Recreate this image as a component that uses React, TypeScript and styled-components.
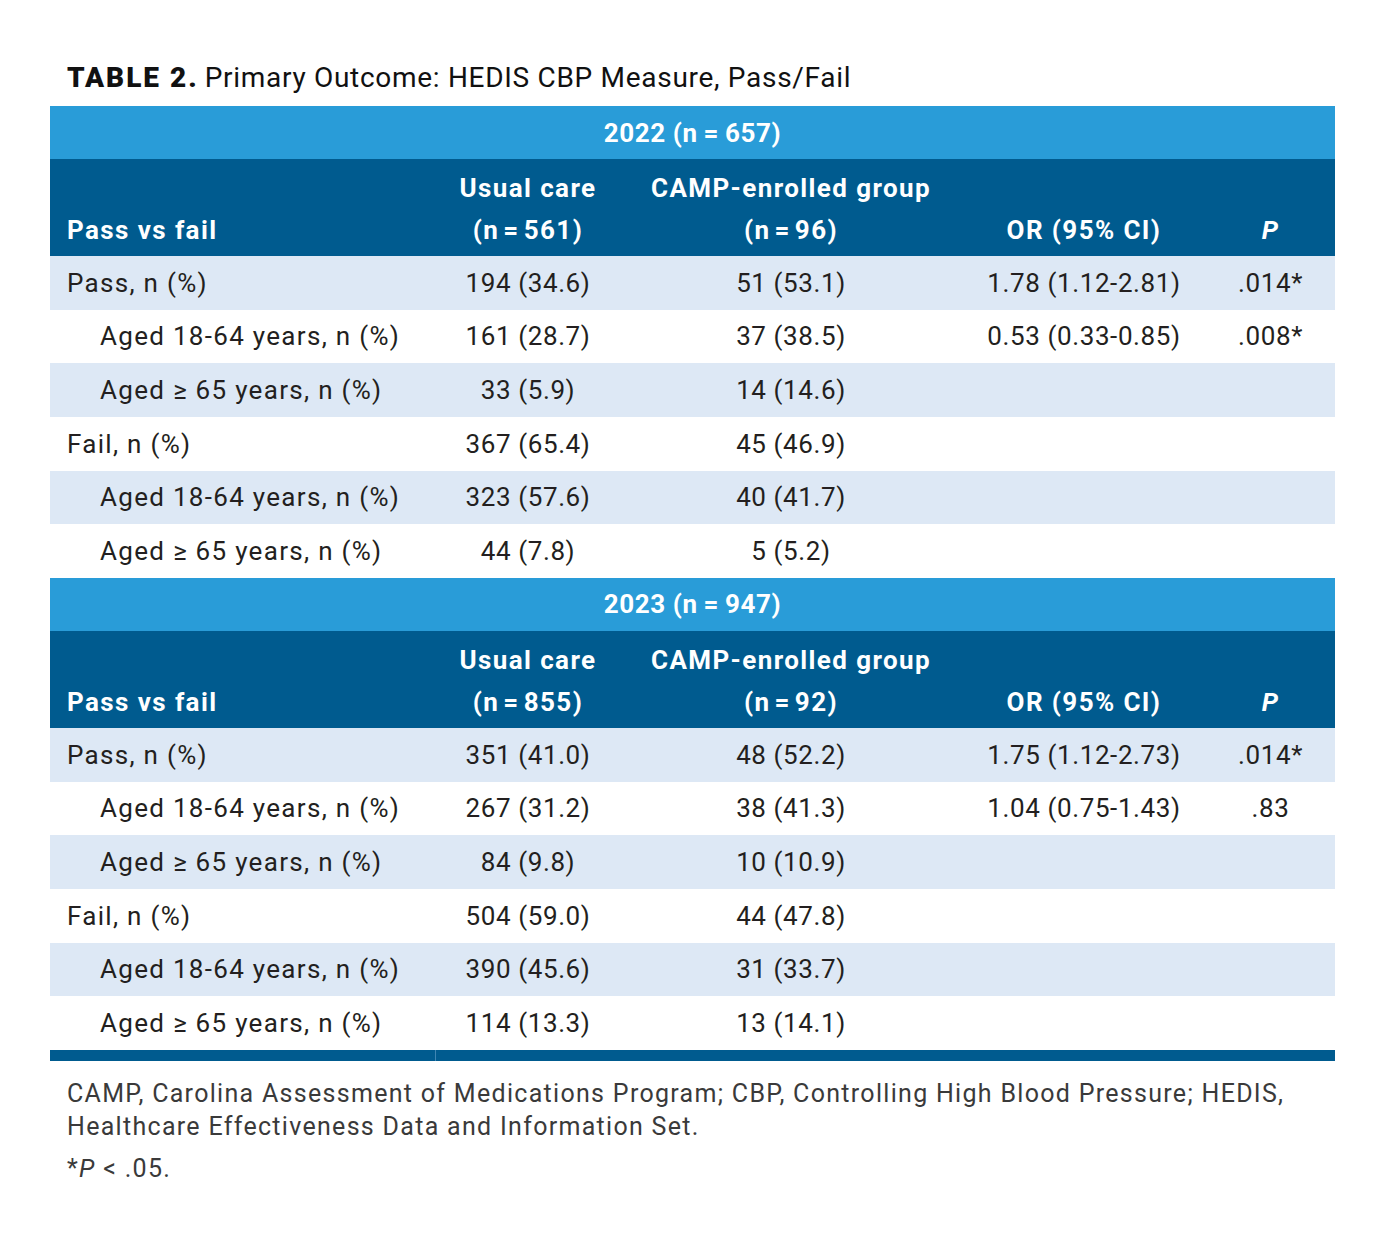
import React from "react";
import styled, { createGlobalStyle } from "styled-components";

const Global = createGlobalStyle`
  html, body { margin: 0; padding: 0; background: #ffffff; }
  body { font-family: Roboto, "Liberation Sans", sans-serif; color: #231f20; }
`;

const Page = styled.div`
  padding: 58px 51px 40px 50px;
  width: 1285px;
`;

const Title = styled.h1`
  margin: 0 0 8px 17px;
  font-size: 28px;
  line-height: 40px;
  font-weight: 400;
  color: #111;
  letter-spacing: 0.7px;
`;

const TitleLabel = styled.span`
  font-weight: 900;
  letter-spacing: 2px;
  margin-right: 6px;
`;

const Grid = styled.div`
  display: grid;
  grid-template-columns: 386px 184px 342px 244px 129px;
`;

const YearBand = styled.div`
  grid-column: 1 / -1;
  height: 53px;
  background: #299cd8;
  color: #fff;
  font-weight: 700;
  font-size: 26px;
  letter-spacing: 0.6px;
  display: flex;
  align-items: center;
  justify-content: center;
`;

const HeadCell = styled.div<{ $align?: "left" | "center"; $italic?: boolean }>`
  background: #005b8f;
  color: #fff;
  font-weight: 700;
  font-size: 26px;
  line-height: 42px;
  letter-spacing: 1.4px;
  height: 97px;
  box-sizing: border-box;
  padding: 0 0 5px ${(p) => (p.$align === "left" ? "17px" : "0")};
  display: flex;
  flex-direction: column;
  justify-content: flex-end;
  align-items: ${(p) => (p.$align === "left" ? "flex-start" : "center")};
  font-style: ${(p) => (p.$italic ? "italic" : "normal")};
  white-space: nowrap;
`;

const Cell = styled.div<{ $shade: boolean; $label?: boolean; $indent?: boolean }>`
  background: ${(p) => (p.$shade ? "#dde8f5" : "#ffffff")};
  height: 53.67px;
  font-size: 26px;
  letter-spacing: ${(p) => (p.$label ? "1.3px" : "0.6px")};
  display: flex;
  align-items: center;
  justify-content: ${(p) => (p.$label ? "flex-start" : "center")};
  padding-left: ${(p) => (p.$label ? (p.$indent ? "50px" : "17px") : "0")};
  color: #231f20;
  white-space: nowrap;
`;

const BottomBar = styled.div`
  display: flex;
  height: 11px;
  gap: 1px;
  background: #3f86b3;
`;

const BarSeg = styled.div<{ $w: string }>`
  background: #005b8f;
  flex: ${(p) => p.$w};
`;

const Notes = styled.div`
  margin: 16px 0 0 17px;
  font-size: 25px;
  line-height: 33px;
  color: #3a3a3a;
  letter-spacing: 1.3px;
`;

const NoteP = styled.p`
  margin: 0 0 9px 0;
`;

type Row = { label: string; indent?: boolean; uc: string; camp: string; or?: string; p?: string };

const t2022: Row[] = [
  { label: "Pass, n (%)", uc: "194 (34.6)", camp: "51 (53.1)", or: "1.78 (1.12-2.81)", p: ".014*" },
  { label: "Aged 18-64 years, n (%)", indent: true, uc: "161 (28.7)", camp: "37 (38.5)", or: "0.53 (0.33-0.85)", p: ".008*" },
  { label: "Aged \u2265 65 years, n (%)", indent: true, uc: "33 (5.9)", camp: "14 (14.6)" },
  { label: "Fail, n (%)", uc: "367 (65.4)", camp: "45 (46.9)" },
  { label: "Aged 18-64 years, n (%)", indent: true, uc: "323 (57.6)", camp: "40 (41.7)" },
  { label: "Aged \u2265 65 years, n (%)", indent: true, uc: "44 (7.8)", camp: "5 (5.2)" },
];

const t2023: Row[] = [
  { label: "Pass, n (%)", uc: "351 (41.0)", camp: "48 (52.2)", or: "1.75 (1.12-2.73)", p: ".014*" },
  { label: "Aged 18-64 years, n (%)", indent: true, uc: "267 (31.2)", camp: "38 (41.3)", or: "1.04 (0.75-1.43)", p: ".83" },
  { label: "Aged \u2265 65 years, n (%)", indent: true, uc: "84 (9.8)", camp: "10 (10.9)" },
  { label: "Fail, n (%)", uc: "504 (59.0)", camp: "44 (47.8)" },
  { label: "Aged 18-64 years, n (%)", indent: true, uc: "390 (45.6)", camp: "31 (33.7)" },
  { label: "Aged \u2265 65 years, n (%)", indent: true, uc: "114 (13.3)", camp: "13 (14.1)" },
];

const eqBand = "\u2009=\u2009";
const eqHead = "\u200A=\u200A";

function Section({ year, n, uc, camp, rows }: { year: string; n: string; uc: string; camp: string; rows: Row[] }) {
  return (
    <>
      <YearBand>{`${year} (n${eqBand}${n})`}</YearBand>
      <HeadCell $align="left">
        <span>Pass vs fail</span>
      </HeadCell>
      <HeadCell>
        <span>Usual care</span>
        <span>{`(n${eqHead}${uc})`}</span>
      </HeadCell>
      <HeadCell>
        <span>CAMP-enrolled group</span>
        <span>{`(n${eqHead}${camp})`}</span>
      </HeadCell>
      <HeadCell>
        <span>OR (95% CI)</span>
      </HeadCell>
      <HeadCell $italic>
        <span>P</span>
      </HeadCell>
      {rows.map((r, i) => {
        const shade = i % 2 === 0;
        return (
          <React.Fragment key={i}>
            <Cell $shade={shade} $label $indent={r.indent}>{r.label}</Cell>
            <Cell $shade={shade}>{r.uc}</Cell>
            <Cell $shade={shade}>{r.camp}</Cell>
            <Cell $shade={shade}>{r.or ?? ""}</Cell>
            <Cell $shade={shade}>{r.p ?? ""}</Cell>
          </React.Fragment>
        );
      })}
    </>
  );
}

export default function App() {
  return (
    <Page>
      <Global />
      <Title>
        <TitleLabel>TABLE 2.</TitleLabel>Primary Outcome: HEDIS CBP Measure, Pass/Fail
      </Title>
      <Grid>
        <Section year="2022" n="657" uc="561" camp="96" rows={t2022} />
        <Section year="2023" n="947" uc="855" camp="92" rows={t2023} />
      </Grid>
      <BottomBar>
        <BarSeg $w="0 0 385px" />
        <BarSeg $w="1 1 auto" />
      </BottomBar>
      <Notes>
        <NoteP>
          CAMP, Carolina Assessment of Medications Program; CBP, Controlling High Blood Pressure; HEDIS,
          Healthcare Effectiveness Data and Information Set.
        </NoteP>
        <NoteP>
          *<i>P</i> &lt; .05.
        </NoteP>
      </Notes>
    </Page>
  );
}
